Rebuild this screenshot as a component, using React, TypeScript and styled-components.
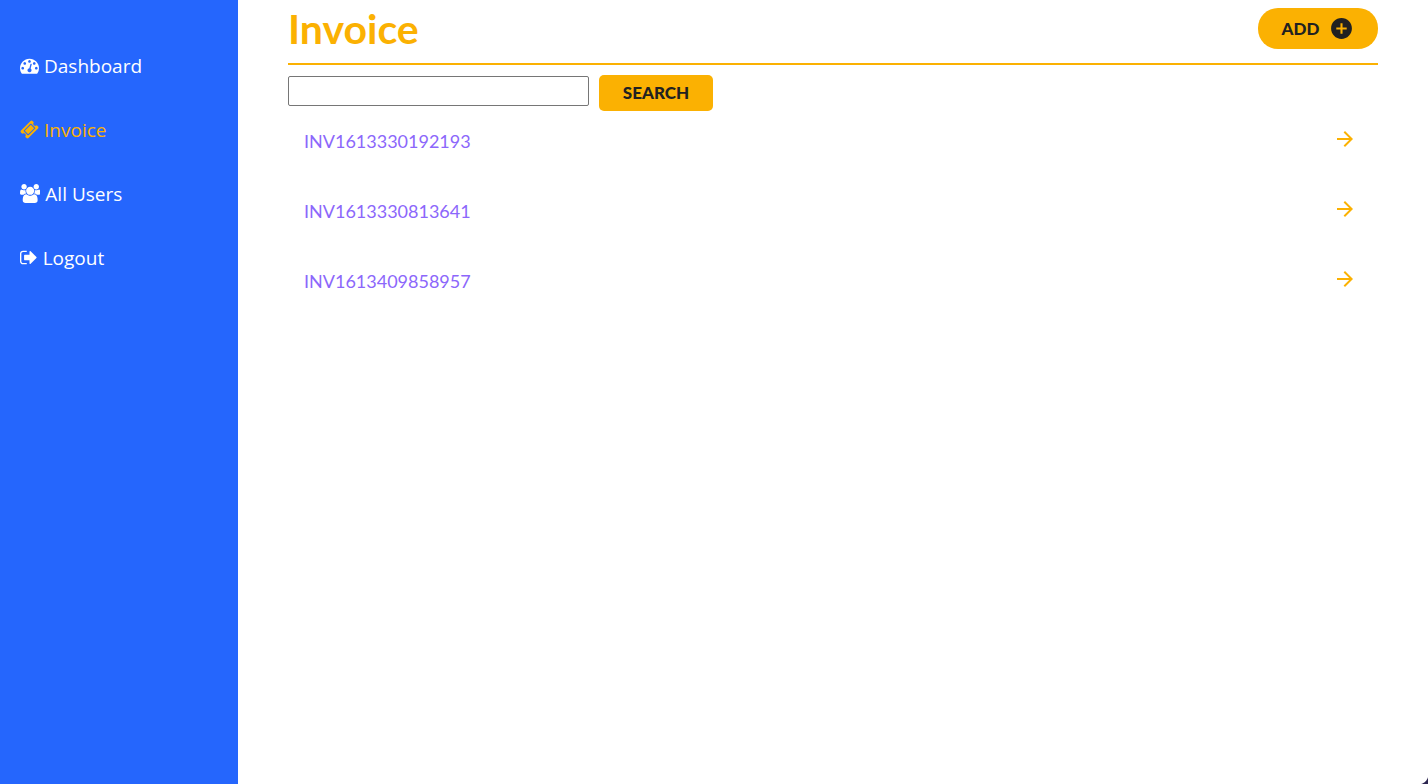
import React from "react";
import styled, { createGlobalStyle } from "styled-components";
import { MdAddCircle, MdArrowForward } from "react-icons/md";

const blue = "#2566fd";
const amber = "#fbb102";
const ink = "#212121";
const violet = "#8c67fb";

const GlobalStyle = createGlobalStyle`
  * { box-sizing: border-box; }
  body {
    margin: 0;
    background: #fff;
    font-family: "Open Sans", "Noto Sans", sans-serif;
  }
`;

const Layout = styled.div`
  display: flex;
  min-height: 100vh;
`;

const Sidebar = styled.nav`
  flex: none;
  width: calc(100% / 6);
  padding: 34px 20px;
  background: ${blue};
`;

const NavLink = styled.a<{ $active?: boolean }>`
  display: flex;
  align-items: center;
  gap: 5px;
  height: 64px;
  color: ${(p) => (p.$active ? amber : "#fff")};
  font-size: 19px;
  font-weight: 500;
  line-height: 24px;
  text-decoration: none;
  white-space: nowrap;
`;

const NavGlyph = styled.svg`
  flex: none;
  height: 19px;
  margin-bottom: 1px;
  fill: currentColor;
`;

const Main = styled.main`
  flex: 1;
  min-width: 0;
  padding: 0 50px;
`;

const Header = styled.header`
  display: flex;
  align-items: flex-start;
  justify-content: space-between;
  padding: 8px 0 13px;
  border-bottom: 2px solid ${amber};
`;

const Title = styled.h1`
  margin: 0;
  color: ${amber};
  font-family: Lato, sans-serif;
  font-size: 41px;
  font-weight: 700;
  line-height: 42px;
`;

const Button = styled.button`
  display: flex;
  align-items: center;
  justify-content: center;
  border: 0;
  background: ${amber};
  color: ${ink};
  font-family: Lato, sans-serif;
  font-size: 17px;
  font-weight: 900;
  line-height: 20px;
  cursor: pointer;
`;

const AddButton = styled(Button)`
  gap: 10px;
  width: 120px;
  height: 41px;
  border-radius: 20px;
`;

const SearchForm = styled.form`
  display: flex;
  gap: 10px;
  padding-top: 10px;
`;

const SearchInput = styled.input`
  width: 301px;
  height: 30px;
  margin-top: 1px;
  padding: 0 8px;
  border: 1px solid #767676;
  border-radius: 2px;
  background: #fff;
  font: inherit;
`;

const SearchButton = styled(Button)`
  width: 114px;
  height: 36px;
  border-radius: 5px;
`;

const InvoiceList = styled.ul`
  margin: 0;
  padding: 0;
  list-style: none;
`;

const InvoiceRow = styled.a`
  display: flex;
  align-items: flex-start;
  justify-content: space-between;
  height: 70px;
  padding: 16px 21px 16px 16px;
  color: ${violet};
  font-family: Lato, sans-serif;
  font-size: 18px;
  line-height: 28px;
  text-decoration: none;
`;

const Arrow = styled(MdArrowForward)`
  color: ${amber};
`;

const WindowCorner = styled.div`
  position: fixed;
  right: 0;
  bottom: 0;
  width: 10px;
  height: 10px;
  background: radial-gradient(circle at 0 0, transparent 10px, #2c2550 11px);
  pointer-events: none;
`;

const navItems = [
  {
    label: "Dashboard",
    viewBox: "0 0 1792 1792",
    path: "M384 1152q0-53-37.5-90.5t-90.5-37.5-90.5 37.5-37.5 90.5 37.5 90.5 90.5 37.5 90.5-37.5 37.5-90.5zm192-448q0-53-37.5-90.5t-90.5-37.5-90.5 37.5-37.5 90.5 37.5 90.5 90.5 37.5 90.5-37.5 37.5-90.5zm428 481l101-382q6-26-7.5-48.5t-38.5-29.5-48 6.5-30 39.5l-101 382q-60 5-107 43.5t-63 98.5q-20 77 20 146t117 89 146-20 89-117q16-60-6-117t-72-91zm660-33q0-53-37.5-90.5t-90.5-37.5-90.5 37.5-37.5 90.5 37.5 90.5 90.5 37.5 90.5-37.5 37.5-90.5zm-640-640q0-53-37.5-90.5t-90.5-37.5-90.5 37.5-37.5 90.5 37.5 90.5 90.5 37.5 90.5-37.5 37.5-90.5zm448 192q0-53-37.5-90.5t-90.5-37.5-90.5 37.5-37.5 90.5 37.5 90.5 90.5 37.5 90.5-37.5 37.5-90.5zm320 448q0 261-141 483-19 29-54 29h-1402q-35 0-54-29-141-221-141-483 0-182 71-348t191-286 286-191 348-71 348 71 286 191 191 286 71 348z",
  },
  {
    label: "Invoice",
    active: true,
    viewBox: "0 0 1792 1792",
    path: "M1024 452l316 316-572 572-316-316zm-211 979l618-618q19-19 19-45t-19-45l-362-362q-18-18-45-18t-45 18l-618 618q-19 19-19 45t19 45l362 362q18 18 45 18t45-18zm889-637l-907 908q-37 37-90.5 37t-90.5-37l-126-126q56-56 56-136t-56-136-136-56-136 56l-125-126q-37-37-37-90.5t37-90.5l907-906q37-37 90.5-37t90.5 37l125 125q-56 56-56 136t56 136 136 56 136-56l126 125q37 37 37 90.5t-37 90.5z",
  },
  {
    label: "All Users",
    viewBox: "0 0 1920 1792",
    path: "M593 896q-162 5-265 128h-134q-82 0-138-40.5t-56-118.5q0-353 124-353 6 0 43.5 21t97.5 42.5 119 21.5q67 0 133-23-5 37-5 66 0 139 81 256zm1071 637q0 120-73 189.5t-194 69.5h-874q-121 0-194-69.5t-73-189.5q0-53 3.5-103.5t14-109 26.5-108.5 43-97.5 62-81 85.5-53.5 111.5-20q10 0 43 21.5t73 48 107 48 135 21.5 135-21.5 107-48 73-48 43-21.5q61 0 111.5 20t85.5 53.5 62 81 43 97.5 26.5 108.5 14 109 3.5 103.5zm-1024-1277q0 106-75 181t-181 75-181-75-75-181 75-181 181-75 181 75 75 181zm704 384q0 159-112.5 271.5t-271.5 112.5-271.5-112.5-112.5-271.5 112.5-271.5 271.5-112.5 271.5 112.5 112.5 271.5zm576 225q0 78-56 118.5t-138 40.5h-134q-103-123-265-128 81-117 81-256 0-29-5-66 66 23 133 23 59 0 119-21.5t97.5-42.5 43.5-21q124 0 124 353zm-128-609q0 106-75 181t-181 75-181-75-75-181 75-181 181-75 181 75 75 181z",
  },
  {
    label: "Logout",
    viewBox: "64 0 1664 1792",
    path: "M704 1440q0 4 1 20t.5 26.5-3 23.5-10 19.5-20.5 6.5h-320q-119 0-203.5-84.5t-84.5-203.5v-704q0-119 84.5-203.5t203.5-84.5h320q13 0 22.5 9.5t9.5 22.5q0 4 1 20t.5 26.5-3 23.5-10 19.5-20.5 6.5h-320q-66 0-113 47t-47 113v704q0 66 47 113t113 47h312l11.5 1 11.5 3 8 5.5 7 9 2 13.5zm928-544q0 26-19 45l-544 544q-19 19-45 19t-45-19-19-45v-288h-448q-26 0-45-19t-19-45v-384q0-26 19-45t45-19h448v-288q0-26 19-45t45-19 45 19l544 544q19 19 19 45z",
  },
];

const invoices = ["INV1613330192193", "INV1613330813641", "INV1613409858957"];

export default function App() {
  return (
    <>
      <GlobalStyle />
      <Layout>
        <Sidebar>
          {navItems.map((item) => (
            <NavLink key={item.label} href="#" $active={item.active}>
              <NavGlyph viewBox={item.viewBox} aria-hidden="true">
                <path d={item.path} />
              </NavGlyph>
              {item.label}
            </NavLink>
          ))}
        </Sidebar>
        <Main>
          <Header>
            <Title>Invoice</Title>
            <AddButton type="button">
              ADD
              <MdAddCircle size={25} aria-hidden="true" />
            </AddButton>
          </Header>
          <SearchForm onSubmit={(e) => e.preventDefault()}>
            <SearchInput type="text" aria-label="Search invoices" />
            <SearchButton type="submit">SEARCH</SearchButton>
          </SearchForm>
          <InvoiceList>
            {invoices.map((id) => (
              <li key={id}>
                <InvoiceRow href="#">
                  {id}
                  <Arrow size={24} aria-hidden="true" />
                </InvoiceRow>
              </li>
            ))}
          </InvoiceList>
        </Main>
      </Layout>
      <WindowCorner />
    </>
  );
}
